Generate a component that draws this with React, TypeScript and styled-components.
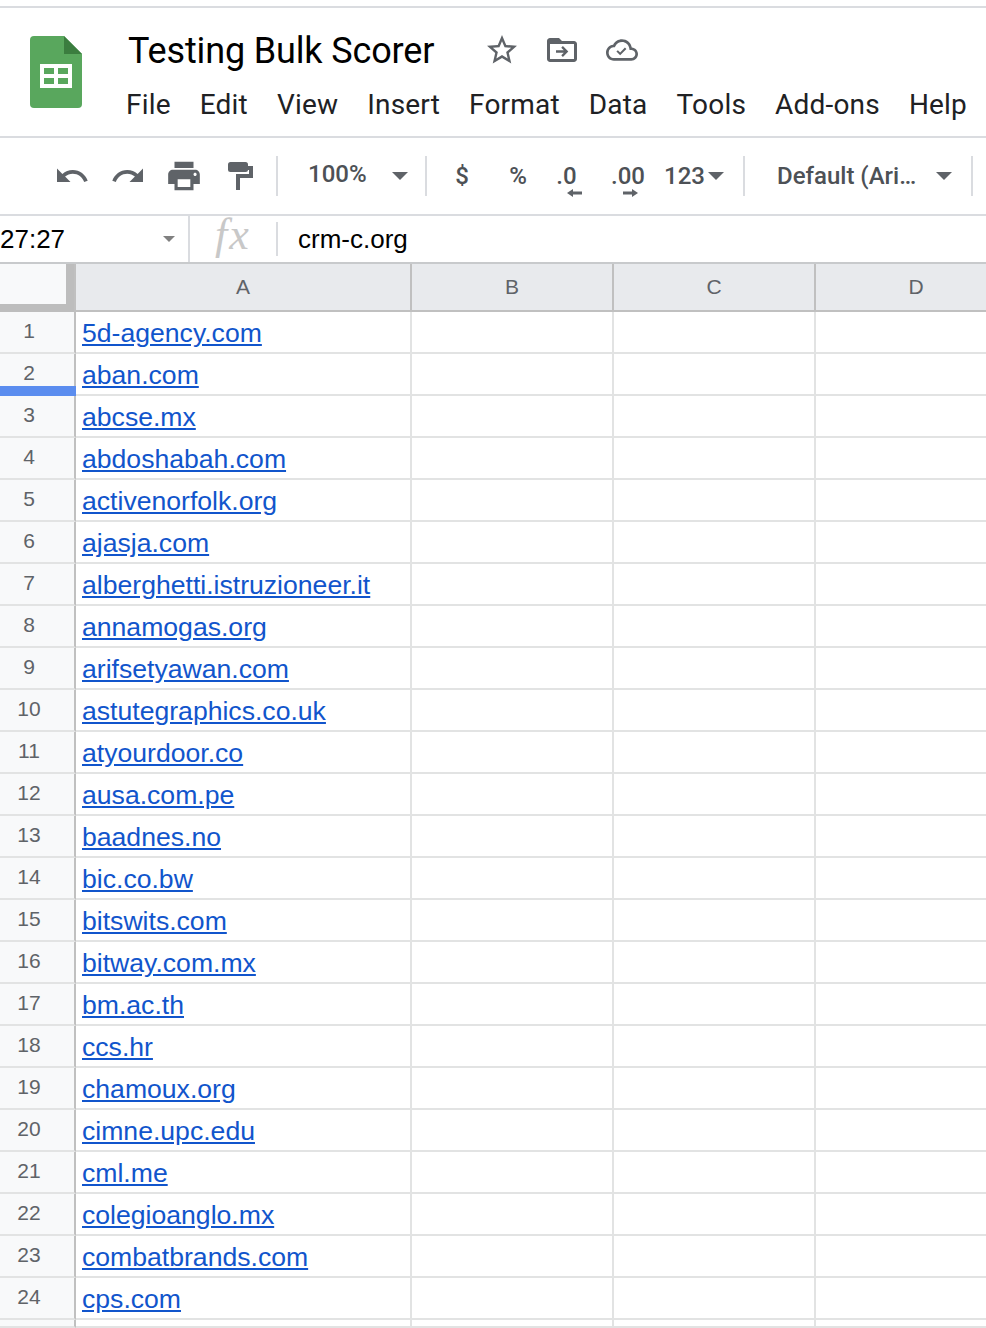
import styled, { createGlobalStyle } from "styled-components";

const GlobalStyle = createGlobalStyle`
  html, body {
    margin: 0;
    background: #fff;
    overflow: hidden;
  }
  body {
    font-family: "Liberation Sans", Arial, sans-serif;
  }
`;

const Page = styled.div`
  width: 986px;
  height: 1328px;
  overflow: hidden;
  padding-top: 6px;
  box-sizing: border-box;
`;

const Header = styled.header`
  height: 132px;
  box-sizing: border-box;
  border-top: 2px solid #dadce0;
  border-bottom: 2px solid #dadce0;
  display: flex;
`;

const LogoBox = styled.div`
  width: 127px;
  padding: 28px 0 0 30px;
  box-sizing: border-box;
`;

const HeaderMain = styled.div`
  display: flex;
  flex-direction: column;
`;

const TitleRow = styled.div`
  height: 70px;
  padding-top: 14px;
  box-sizing: border-box;
  display: flex;
  align-items: center;
`;

const Title = styled.h1`
  margin: 2px 0 0 1px;
  width: 356px;
  font: 400 36px/48px Roboto, sans-serif;
  letter-spacing: -0.15px;
  color: #000;
  white-space: nowrap;
`;

const TitleIcon = styled.svg<{ $gap: number }>`
  fill: #5f6368;
  margin-right: ${({ $gap }) => $gap}px;
  flex: none;
`;

const MenuBar = styled.nav`
  display: flex;
  gap: 29px;
  height: 54px;
  margin-left: -1px;
  align-items: center;
`;

const MenuItem = styled.span`
  font: 400 28px/36px Roboto, sans-serif;
  letter-spacing: 0.19px;
  color: #202124;
`;

const Toolbar = styled.div`
  height: 78px;
  box-sizing: border-box;
  border-bottom: 2px solid #dadce0;
  padding-left: 44px;
  display: flex;
  align-items: center;
`;

const ToolCell = styled.div<{ $w: number; $pad?: number }>`
  width: ${({ $w }) => $w}px;
  box-sizing: border-box;
  padding-left: ${({ $pad }) => $pad ?? 0}px;
  flex: none;
  display: flex;
  align-items: center;
  justify-content: ${({ $pad }) => ($pad === undefined ? "center" : "flex-start")};
  height: 40px;
`;

const ToolIcon = styled.svg`
  fill: #5f6368;
  display: block;
`;

const ToolDivider = styled.div`
  width: 2px;
  height: 40px;
  flex: none;
  background: #dadce0;
`;

const ToolText = styled.span<{ $up?: number }>`
  font: 500 24px/32px Roboto, sans-serif;
  color: #4d5156;
  white-space: nowrap;
  margin-bottom: ${({ $up }) => $up ?? 0}px;
`;

const Caret = styled.span<{ $color?: string; $size?: number; $gap?: number }>`
  flex: none;
  width: 0;
  height: 0;
  margin-left: ${({ $gap }) => $gap ?? 0}px;
  border-left: ${({ $size }) => $size ?? 8}px solid transparent;
  border-right: ${({ $size }) => $size ?? 8}px solid transparent;
  border-top: ${({ $size }) => $size ?? 8}px solid ${({ $color }) => $color ?? "#5f6368"};
`;

const DecimalCell = styled(ToolCell)`
  position: relative;
`;

const DecimalArrow = styled.svg<{ $left: number }>`
  position: absolute;
  left: ${({ $left }) => $left}px;
  top: 33px;
  fill: #5f6368;
`;

const FormulaBar = styled.div`
  height: 48px;
  box-sizing: border-box;
  border-bottom: 2px solid #c8cacc;
  display: flex;
  align-items: center;
`;

const NameBox = styled.div`
  width: 188px;
  height: 46px;
  box-sizing: border-box;
  padding: 0 13px 0 0;
  display: flex;
  align-items: center;
  justify-content: space-between;
  font-size: 26px;
  color: #000;
`;

const BarDivider = styled.div<{ $full?: boolean }>`
  width: 2px;
  flex: none;
  height: ${({ $full }) => ($full ? 46 : 34)}px;
  background: #dadce0;
`;

const FxLabel = styled.span`
  width: 86px;
  height: 46px;
  text-align: center;
  font: italic 400 44px/38px "Liberation Serif", serif;
  letter-spacing: 2px;
  color: #c8c8c8;
`;

const FormulaValue = styled.span`
  margin-left: 20px;
  font-size: 26px;
  color: #000;
`;

const SheetGrid = styled.div`
  display: grid;
  grid-template-columns: 76px 336px 202px 202px 202px;
  grid-template-rows: 48px repeat(24, 42px) 8px;
`;

const Corner = styled.div`
  box-sizing: border-box;
  background: #bdbdbd;
  padding: 0 8px 8px 0;
  border-right: 2px solid #c0c0c0;
`;

const CornerInner = styled.div`
  height: 100%;
  background: #f8f9fa;
`;

const ColumnHead = styled.div`
  box-sizing: border-box;
  background: #e8eaed;
  border-right: 2px solid #c0c0c0;
  border-bottom: 2px solid #c0c0c0;
  padding-bottom: 2px;
  display: flex;
  align-items: center;
  justify-content: center;
  font: 400 21px/1 "Liberation Sans", sans-serif;
  color: #5f6368;
`;

const RowHead = styled.div`
  position: relative;
  box-sizing: border-box;
  background: #f8f9fa;
  border-right: 2px solid #c0c0c0;
  border-bottom: 2px solid #e2e3e3;
  padding: 0 16px 4px 0;
  display: flex;
  align-items: center;
  justify-content: center;
  font: 400 21px/1 "Liberation Sans", sans-serif;
  color: #5f6368;
`;

const FreezeMarker = styled.span`
  position: absolute;
  left: 0;
  right: -2px;
  bottom: -2px;
  height: 10px;
  background: #5b8def;
`;

const Cell = styled.div`
  box-sizing: border-box;
  border-right: 2px solid #e2e3e3;
  border-bottom: 2px solid #e2e3e3;
  padding: 2px 0 0 6px;
  display: flex;
  align-items: center;
  overflow: hidden;
  white-space: nowrap;
`;

const CellLink = styled.a`
  font-size: 26.6px;
  line-height: 36px;
  color: #1155cc;
  text-decoration: underline;
`;

const domains = [
  "5d-agency.com",
  "aban.com",
  "abcse.mx",
  "abdoshabah.com",
  "activenorfolk.org",
  "ajasja.com",
  "alberghetti.istruzioneer.it",
  "annamogas.org",
  "arifsetyawan.com",
  "astutegraphics.co.uk",
  "atyourdoor.co",
  "ausa.com.pe",
  "baadnes.no",
  "bic.co.bw",
  "bitswits.com",
  "bitway.com.mx",
  "bm.ac.th",
  "ccs.hr",
  "chamoux.org",
  "cimne.upc.edu",
  "cml.me",
  "colegioanglo.mx",
  "combatbrands.com",
  "cps.com",
];

const menus = ["File", "Edit", "View", "Insert", "Format", "Data", "Tools", "Add-ons", "Help"];

const SheetsLogo = () => (
  <svg width="52" height="72" viewBox="0 0 52 72">
    <path d="M4 0h30l18 18v50a4 4 0 0 1-4 4H4a4 4 0 0 1-4-4V4a4 4 0 0 1 4-4z" fill="#59a75d" />
    <path d="M34 0l18 18H34z" fill="#3b7d3f" />
    <path d="M10 28h32v24H10zm4 4v6h10v-6zm14 0v6h10v-6zM14 42v6h10v-6zm14 0v6h10v-6z" fill="#fff" fillRule="evenodd" />
  </svg>
);

const Row = ({ n, domain }: { n?: number; domain?: string }) => (
  <>
    <RowHead>
      {n}
      {n === 2 && <FreezeMarker />}
    </RowHead>
    <Cell>{domain && <CellLink href="#">{domain}</CellLink>}</Cell>
    <Cell />
    <Cell />
    <Cell />
  </>
);

const App = () => (
  <Page>
    <GlobalStyle />
    <Header>
      <LogoBox>
        <SheetsLogo />
      </LogoBox>
      <HeaderMain>
        <TitleRow>
          <Title>Testing Bulk Scorer</Title>
          <TitleIcon $gap={24} width="36" height="36" viewBox="0 0 24 24">
            <path d="M22 9.24l-7.19-.62L12 2 9.19 8.63 2 9.24l5.46 4.73L5.82 21 12 17.27 18.18 21l-1.63-7.03L22 9.24zM12 15.4l-3.76 2.27 1-4.28-3.32-2.88 4.38-.38L12 6.1l1.71 4.04 4.38.38-3.32 2.88 1 4.28L12 15.4z" />
          </TitleIcon>
          <TitleIcon $gap={26} width="36" height="36" viewBox="0 0 24 24">
            <path d="M20 6h-8l-2-2H4c-1.1 0-2 .9-2 2v12c0 1.1.9 2 2 2h16c1.1 0 2-.9 2-2V8c0-1.1-.9-2-2-2zm0 12H4V8h16v10z" />
            <path d="M12.6 9.4l3.6 3.6-3.6 3.6-1.1-1.1 1.7-1.7H8v-1.6h5.2l-1.7-1.7z" />
          </TitleIcon>
          <TitleIcon $gap={0} width="32" height="32" viewBox="0 0 24 24">
            <path d="M19.35 10.04C18.67 6.59 15.64 4 12 4 9.11 4 6.6 5.64 5.35 8.04 2.34 8.36 0 10.91 0 14c0 3.31 2.69 6 6 6h13c2.76 0 5-2.24 5-5 0-2.64-2.05-4.78-4.65-4.96zM19 18H6c-2.21 0-4-1.79-4-4 0-2.05 1.53-3.76 3.56-3.97l1.07-.11.5-.95C8.08 7.14 9.94 6 12 6c2.62 0 4.88 1.86 5.39 4.43l.3 1.5 1.53.11c1.56.1 2.78 1.41 2.78 2.96 0 1.65-1.35 3-3 3z" />
            <path d="M10.6 16l-2.8-2.8 1.1-1.1 1.7 1.7 3.6-3.6 1.1 1.1z" />
          </TitleIcon>
        </TitleRow>
        <MenuBar>
          {menus.map((m) => (
            <MenuItem key={m}>{m}</MenuItem>
          ))}
        </MenuBar>
      </HeaderMain>
    </Header>

    <Toolbar>
      <ToolCell $w={56}>
        <ToolIcon width="36" height="36" viewBox="0 0 24 24">
          <path d="M12.5 8c-2.65 0-5.05.99-6.9 2.6L2 7v9h9l-3.62-3.62c1.39-1.16 3.16-1.88 5.12-1.88 3.54 0 6.55 2.31 7.6 5.5l2.37-.78C21.08 11.03 17.15 8 12.5 8z" />
        </ToolIcon>
      </ToolCell>
      <ToolCell $w={56}>
        <ToolIcon width="36" height="36" viewBox="0 0 24 24">
          <path d="M18.4 10.6C16.55 8.99 14.15 8 11.5 8c-4.65 0-8.58 3.03-9.96 7.22L3.9 16c1.05-3.19 4.05-5.5 7.6-5.5 1.95 0 3.73.72 5.12 1.88L13 16h9V7l-3.6 3.6z" />
        </ToolIcon>
      </ToolCell>
      <ToolCell $w={56}>
        <ToolIcon width="38" height="38" viewBox="0 0 24 24">
          <path d="M19 8H5c-1.66 0-3 1.34-3 3v6h4v4h12v-4h4v-6c0-1.66-1.34-3-3-3zm-3 11H8v-5h8v5zm3-7c-.55 0-1-.45-1-1s.45-1 1-1 1 .45 1 1-.45 1-1 1zm-1-9H6v4h12V3z" />
        </ToolIcon>
      </ToolCell>
      <ToolCell $w={64} $pad={16}>
        <ToolIcon width="26" height="28" viewBox="0 0 26 28">
          <rect width="20" height="10" rx="2.5" />
          <path d="M19 4h6v12H12v12H8V12h13V8h-2z" />
        </ToolIcon>
      </ToolCell>
      <ToolDivider />
      <ToolCell $w={147} $pad={30}>
        <ToolText $up={4}>100%</ToolText>
        <Caret $gap={25} />
      </ToolCell>
      <ToolDivider />
      <ToolCell $w={70}>
        <ToolText>$</ToolText>
      </ToolCell>
      <ToolCell $w={42}>
        <ToolText>%</ToolText>
      </ToolCell>
      <DecimalCell $w={55}>
        <ToolText>.0</ToolText>
        <DecimalArrow $left={28} width="15" height="8" viewBox="0 0 15 8">
          <path d="M6 0v2.5h9v3H6V8L0 4z" />
        </DecimalArrow>
      </DecimalCell>
      <DecimalCell $w={68}>
        <ToolText>.00</ToolText>
        <DecimalArrow $left={29} width="15" height="8" viewBox="0 0 15 8">
          <path d="M9 0v2.5H0v3h9V8l6-4z" />
        </DecimalArrow>
      </DecimalCell>
      <ToolCell $w={81} $pad={2}>
        <ToolText>123</ToolText>
        <Caret $gap={3} />
      </ToolCell>
      <ToolDivider />
      <ToolCell $w={226} $pad={32}>
        <ToolText>Default (Ari…</ToolText>
        <Caret $gap={20} />
      </ToolCell>
      <ToolDivider />
    </Toolbar>

    <FormulaBar>
      <NameBox>
        27:27
        <Caret $size={6} $color="#808080" />
      </NameBox>
      <BarDivider $full />
      <FxLabel>fx</FxLabel>
      <BarDivider />
      <FormulaValue>crm-c.org</FormulaValue>
    </FormulaBar>

    <SheetGrid>
      <Corner>
        <CornerInner />
      </Corner>
      {["A", "B", "C", "D"].map((c) => (
        <ColumnHead key={c}>{c}</ColumnHead>
      ))}
      {domains.map((d, i) => (
        <Row key={d} n={i + 1} domain={d} />
      ))}
      <Row />
    </SheetGrid>
  </Page>
);

export default App;
